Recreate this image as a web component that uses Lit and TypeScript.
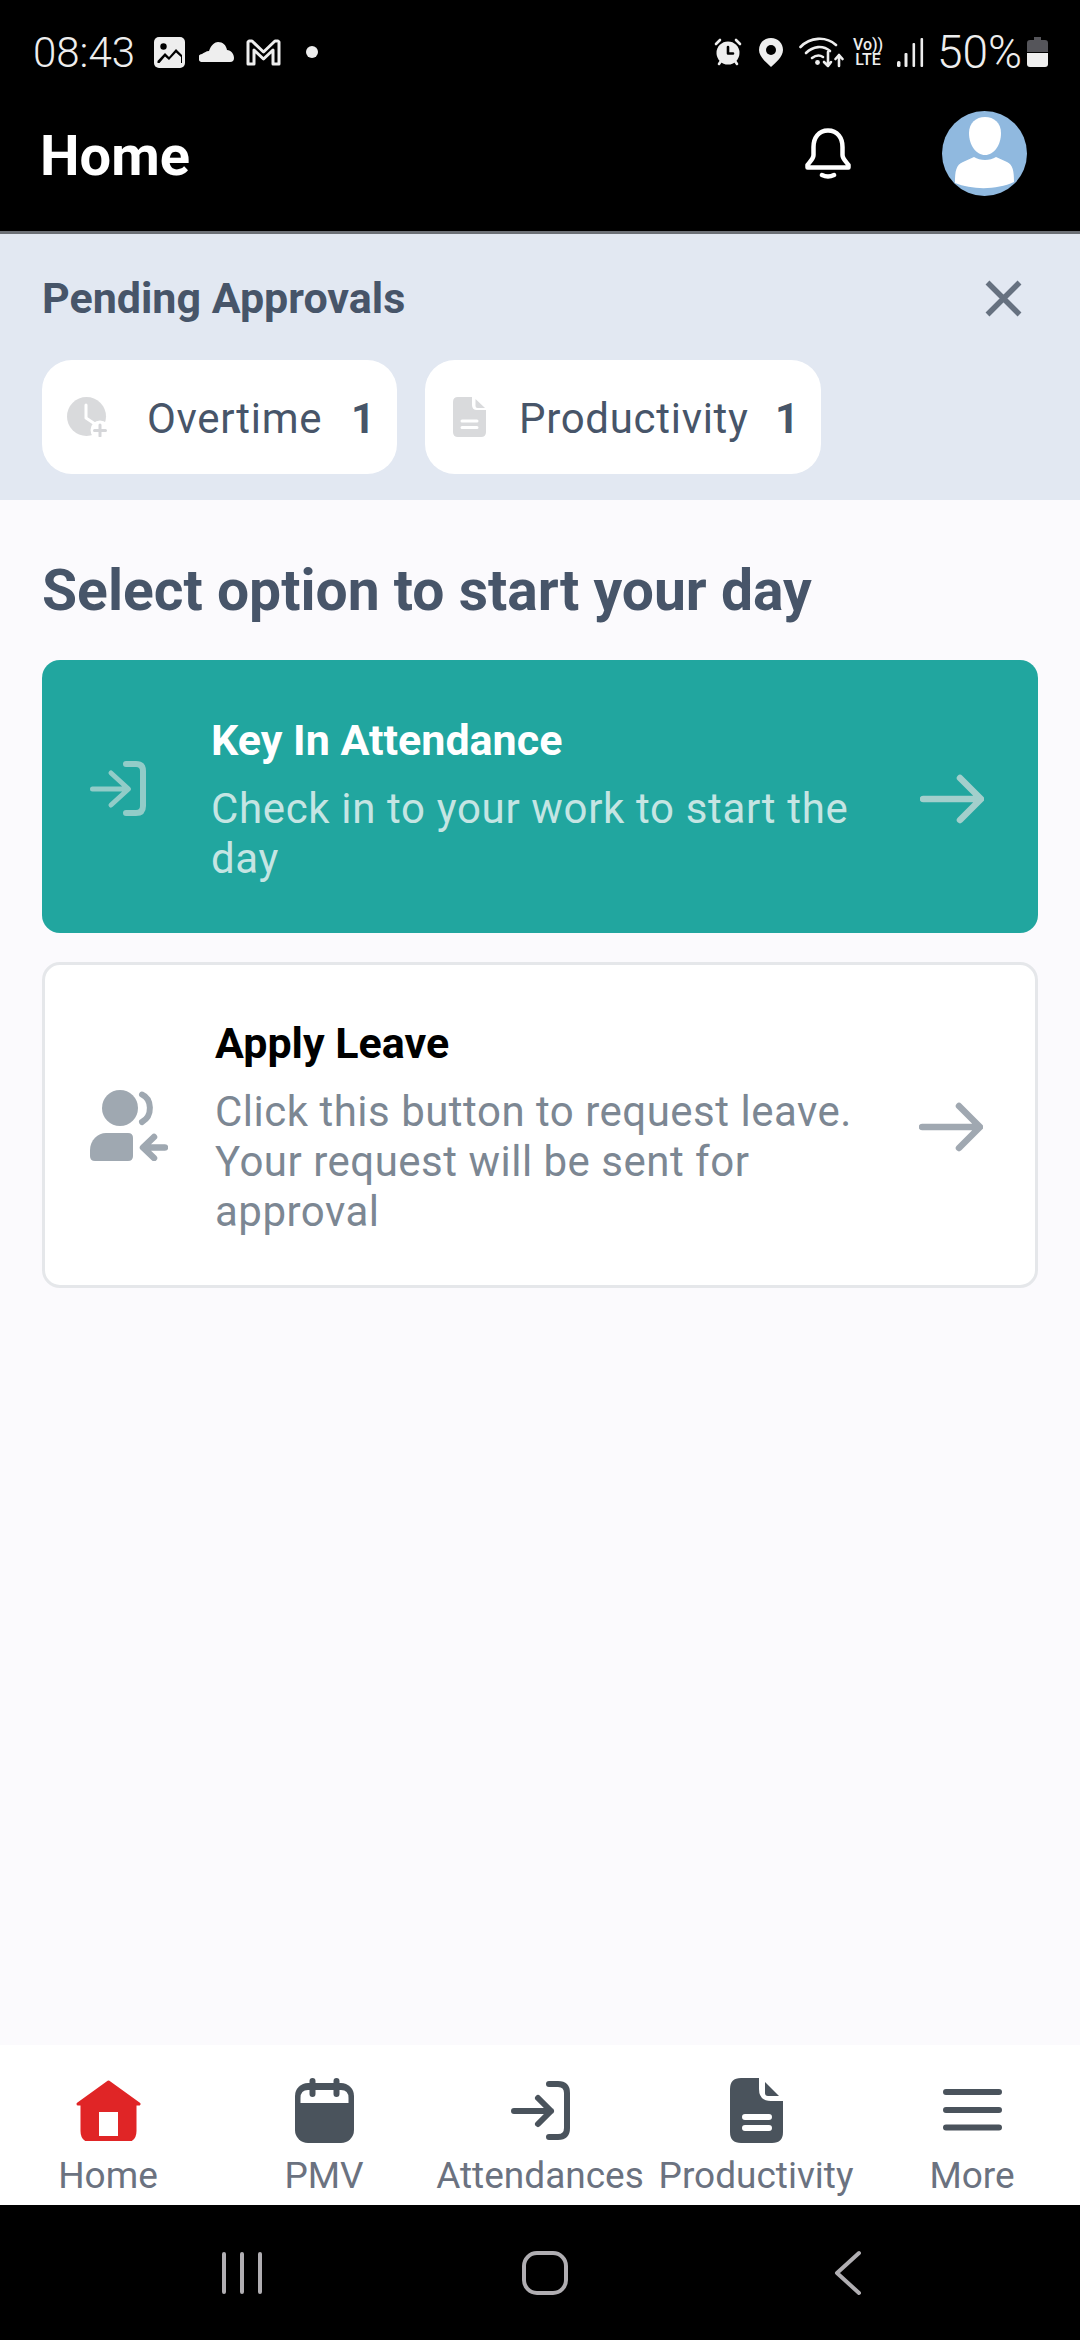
import { LitElement, html, css, svg } from "lit";
import { customElement } from "lit/decorators.js";

const ic = (w: number, h: number, body: unknown) =>
  html`<svg class="ic" width=${w} height=${h} viewBox="0 0 ${w} ${h}" fill="none" stroke-linecap="round" stroke-linejoin="round">${body}</svg>`;

const DK = "#4a535c";

const imageIcon = ic(31, 31, svg`<rect width="31" height="31" rx="5" fill="#eeeeee"/><circle cx="9.5" cy="9.5" r="3.2" fill="#000"/><path d="M3.5 24 L11 16 L15 20 L22 12 L28 18 V26 H3.5Z" fill="#000"/><path d="M5.5 26 L11 19.5 L15 23 L22 15.5 L27 20 V26Z" fill="#eee"/>`);
const cloudIcon = ic(35, 20, svg`<path d="M4 20 a4 4 0 0 1 -1 -8 C5 11 7 9 10 9 C12 3 16 0 19 0 C24 0 27 3 28 8 C32 8 35 12 35 16 a4 4 0 0 1 -4 4Z" fill="#eeeeee"/>`);
const gmailIcon = ic(35, 27, svg`<path d="M2 25 V3 L3 2 H6 L17.5 13 L29 2 H32 L33 3 V25 H27 V11 L17.5 20 L8 11 V25 Z" stroke="#eeeeee" stroke-width="3"/>`);
const alarmIcon = ic(28, 28, svg`<circle cx="14" cy="15" r="11.5" fill="#eeeeee"/><path d="M14 9 V15.5 H19" stroke="#000" stroke-width="2.6"/><path d="M2 6 L6 2 M26 6 L22 2 M5 26 L7 23 M23 26 L21 23" stroke="#eeeeee" stroke-width="2.6"/>`);
const pinIcon = ic(24, 29, svg`<path d="M12 0 C5 0 0 5 0 12 C0 19 8 25 12 29 C16 25 24 19 24 12 C24 5 19 0 12 0Z" fill="#eeeeee"/><circle cx="12" cy="12" r="5" fill="#000"/>`);
const wifiIcon = ic(45, 32, svg`<g stroke="#eeeeee" stroke-width="2.6"><path d="M1.5 11 C11 1 27 0 37 9"/><path d="M7 17 C14 10 24 9 31 15"/><path d="M13 22 C17 19 21 19 24 21"/><path d="M29 16 V30 M25 26 L29 30 L32 26"/><path d="M40 30 V19 M36.5 23 L40 19 L43.5 23"/></g><circle cx="18.5" cy="26.5" r="2.4" fill="#eeeeee"/>`);
const signalIcon = ic(28, 29, svg`<g fill="#eeeeee"><rect x="1" y="23" width="3.5" height="6" rx="1.5"/><rect x="8.5" y="15" width="3" height="14" rx="1"/><rect x="16.5" y="5" width="2.6" height="24" rx="1"/><rect x="24.5" y="0" width="2.6" height="29" rx="1"/></g>`);
const batteryIcon = ic(21, 30, svg`<path d="M7 0 H14 V3 H18 Q21 3 21 6 V15 H0 V6 Q0 3 3 3 H7Z" fill="#55555a"/><path d="M0 16 H21 V27 Q21 30 18 30 H3 Q0 30 0 27Z" fill="#eeeeee"/>`);
const bellIcon = ic(46, 52, svg`<g stroke="#fff" stroke-width="4.5"><path d="M23 2.5 C13.5 2.5 8.5 10 8.5 19 V27 C8.5 31 4.5 34 2.5 37 V39.5 H43.5 V37 C41.5 34 37.5 31 37.5 27 V19 C37.5 10 32.5 2.5 23 2.5Z"/><path d="M17 47 Q23 50 29 47"/></g>`);
const avatarIcon = ic(85, 85, svg`<circle cx="42.5" cy="42.5" r="42.5" fill="#90b9df"/><path d="M43 6 C52 6 59 12 59 22 C59 34 52 44 43 44 C34 44 27 34 27 22 C27 12 34 6 43 6Z" fill="#fff"/><path d="M13 72 C13 60 14 54 21 51 L32 46 C38 50 48 50 54 46 L65 51 C71 54 72 60 72 71 C55 79 30 79 13 72Z" fill="#fff"/>`);
const closeIcon = ic(37, 37, svg`<path d="M2.5 2.5 L34.5 34.5 M34.5 2.5 L2.5 34.5" stroke="#667180" stroke-width="5.5" stroke-linecap="butt"/>`);
const clockIcon = ic(41, 40, svg`<circle cx="19.5" cy="19.5" r="19.5" fill="#d9dadc"/><path d="M19 8 V21 L28 27" stroke="#fff" stroke-width="3"/><circle cx="33" cy="33" r="9.5" fill="#fff"/><path d="M33 28 V39 M27.5 33.5 H38.5" stroke="#d5d6d9" stroke-width="3"/>`);
const fileChipIcon = ic(33, 40, svg`<path d="M5 0 H19 V8 Q19 13 24 13 H33 V35 Q33 40 28 40 H5 Q0 40 0 35 V5 Q0 0 5 0Z" fill="#d9dadc"/><path d="M22.5 2 L32 11 H24.5 Q22.5 11 22.5 9Z" fill="#d9dadc"/><path d="M9 24 H24 M9 30.5 H24" stroke="#fff" stroke-width="3"/>`);
const keyIcon = ic(56, 55, svg`<g stroke="#92ccc8"><path d="M2.5 28 H38 M21 12 L38.5 28 L21 44" stroke-width="5"/><path d="M36 3 H46 Q53 3 53 10 V45 Q53 52 46 52 H36" stroke-width="6"/></g>`);
const arrow = (c: string) => ic(64, 50, svg`<path d="M3 25 H60 M40 4 L61 25 L40 46" stroke=${c} stroke-width="6.5"/>`);
const leaveIcon = ic(78, 71, svg`<circle cx="30" cy="18" r="18" fill="#9fa8b1"/><path d="M52 4.5 C62 9 63 26 52 32" stroke="#9fa8b1" stroke-width="6"/><path d="M16 43 H38 Q43 43 43 48 V66 Q43 71 38 71 H5 Q0 71 0 66 V60 C0 50 8 43 16 43Z" fill="#9fa8b1"/><path d="M75 57.5 H55 M64 47 L53 57.5 L64 68" stroke="#9fa8b1" stroke-width="6.5"/>`);
const navHome = ic(65, 61, svg`<path d="M32.5 2 L63 24 H59 V51 Q59 61 49 61 H16 Q6 61 6 51 V24 H2Z" fill="#e02526" stroke="#e02526" stroke-width="3"/><rect x="23" y="32" width="19" height="24" fill="#fff"/>`);
const navCal = ic(59, 65, svg`<rect y="5" width="59" height="60" rx="13" fill=${DK}/><path d="M5.5 25 V20 Q5.5 12 13 12 H46 Q53.5 12 53.5 20 V25Z" fill="#fff"/><path d="M17.5 3 V16 M41.5 3 V16" stroke=${DK} stroke-width="6"/>`);
const navAtt = ic(59, 59, svg`<g stroke=${DK} stroke-width="6"><path d="M3 30 H40 M27 17 L40 30 L27 43"/><path d="M38 3 H47 Q56 3 56 12 V47 Q56 56 47 56 H38"/></g>`);
const navFile = ic(53, 65, svg`<path d="M11 0 H29 V11 Q29 23 41 23 H53 V54 Q53 65 42 65 H11 Q0 65 0 54 V11 Q0 0 11 0Z" fill=${DK}/><path d="M35 4 L49 18 H38 Q35 18 35 15Z" fill=${DK}/><path d="M15 39 H39 M15 50 H39" stroke="#fff" stroke-width="6"/>`);
const navMenu = ic(59, 42, svg`<path d="M3 3 H56 M3 21 H56 M3 38.5 H56" stroke=${DK} stroke-width="6"/>`);
const recents = ic(42, 42, svg`<path d="M2 2 V40 M20 2 V40 M38 2 V40" stroke="#b0aeb2" stroke-width="4"/>`);
const homeBtn = ic(46, 44, svg`<rect x="2" y="2" width="42" height="40" rx="13" stroke="#b0aeb2" stroke-width="4"/>`);
const backBtn = ic(28, 46, svg`<path d="M25 3 L3 23 L25 43" stroke="#b0aeb2" stroke-width="4"/>`);

@customElement("app-root")
export class AppRoot extends LitElement {
  static styles = css`
    :host { display: flex; flex-direction: column; width: 1080px; height: 2340px; background: #fbfafd; font-family: Roboto, "Liberation Sans", sans-serif; overflow: hidden; }
    .ic { display: block; flex: none; }
    .top { background: #000; height: 231px; border-bottom: 3px solid #6b6f75; box-sizing: content-box; flex: none; }
    .status { height: 104px; display: flex; align-items: center; justify-content: space-between; padding: 0 32px 0 33px; color: #eee; }
    .group { display: flex; align-items: center; }
    .time { font-size: 42px; font-weight: 300; width: 121px; }
    .cloud { margin: 0 12px 0 14px; }
    .dot { width: 12px; height: 12px; border-radius: 50%; background: #eee; margin-left: 25px; }
    .pin { margin: 0 16px 0 17px; }
    .volte { font-size: 16px; line-height: 15px; font-weight: 500; width: 30px; margin: 0 13px 0 9px; text-align: center; }
    .pct { font-size: 46px; font-weight: 300; margin: 0 5px 0 13px; }
    .bar { display: flex; align-items: center; height: 85px; margin-top: 7px; padding: 0 53px 0 40px; }
    .bar h1 { margin: 4px 0 0; font-size: 56px; font-weight: 700; color: #fff; flex: 1; letter-spacing: 0; }
    .bell { margin-right: 91px; }
    .banner { background: #e2e8f2; height: 266px; padding: 28px 58px 0 42px; flex: none; box-sizing: border-box; }
    .bhead { display: flex; align-items: center; justify-content: space-between; height: 72px; }
    .bhead span { font-size: 43px; font-weight: 700; color: #475569; }
    .chips { display: flex; gap: 28px; margin-top: 26px; }
    .chip { height: 114px; background: #fff; border-radius: 30px; display: flex; align-items: center; font-size: 42px; color: #475569; box-sizing: border-box; }
    .chip b { font-weight: 700; padding-top: 3px; }
    .chip.o { padding: 0 22px 0 25px; width: 355px; }
    .chip.p { padding: 0 22px 0 28px; width: 396px; }
    .chip .l { flex: 1; letter-spacing: 0.7px; padding-top: 3px; }
    .chip.o .l { margin-left: 39px; }
    .chip.p .l { margin-left: 33px; }
    main { flex: 1; padding: 61px 42px 0; }
    h2 { margin: 0 0 39px; font-size: 57px; line-height: 60px; font-weight: 700; color: #475569; }
    .card { display: flex; align-items: center; border-radius: 18px; box-sizing: border-box; }
    .card h3 { margin: 2px 0 16px; font-size: 43px; line-height: 56px; font-weight: 700; }
    .card p { margin: 0; font-size: 42px; line-height: 50px; }
    .txt { flex: 1; }
    .teal { background: #21a69f; height: 273px; padding: 0 54px 0 48px; margin-bottom: 29px; }
    .teal > .ic:first-child { margin-bottom: 17px; }
    .teal > .ic:last-child { margin-top: 4px; }
    .teal .txt { margin: 0 30px 0 65px; }
    .teal h3 { color: #fff; }
    .teal p { color: #c5e5e3; letter-spacing: 0.65px; }
    .white { background: #fff; border: 3px solid #e5e7ea; height: 326px; padding: 0 52px 0 45px; }
    .white > .ic:last-child { margin-top: 3px; }
    .white .txt { margin: 0 31px 0 47px; }
    .white h3 { color: #000; }
    .white p { color: #7c8793; letter-spacing: 0.5px; }
    nav { background: #fff; height: 160px; display: grid; grid-template-columns: repeat(5, 216px); flex: none; }
    .item { display: flex; flex-direction: column; align-items: center; padding-top: 32px; }
    .slot { height: 66px; display: flex; align-items: center; justify-content: center; margin-bottom: 11px; }
    .item span { font-size: 37px; line-height: 44px; color: #6b7280; white-space: nowrap; }
    .sys { background: #000; height: 135px; display: flex; align-items: center; padding-left: 222px; flex: none; }
    .sys .h { margin-left: 258px; }
    .sys .b { margin-left: 266px; }
  `;

  render() {
    const items: [string, unknown][] = [["Home", navHome], ["PMV", navCal], ["Attendances", navAtt], ["Productivity", navFile], ["More", navMenu]];
    return html`
      <div class="top">
        <div class="status">
          <div class="group">
            <span class="time">08:43</span>${imageIcon}<span class="cloud">${cloudIcon}</span>${gmailIcon}<span class="dot"></span>
          </div>
          <div class="group">
            ${alarmIcon}<span class="pin">${pinIcon}</span>${wifiIcon}
            <span class="volte">Vo))<br />LTE</span>${signalIcon}<span class="pct">50%</span>${batteryIcon}
          </div>
        </div>
        <div class="bar"><h1>Home</h1><span class="bell">${bellIcon}</span>${avatarIcon}</div>
      </div>
      <section class="banner">
        <div class="bhead"><span>Pending Approvals</span>${closeIcon}</div>
        <div class="chips">
          <div class="chip o">${clockIcon}<span class="l">Overtime</span><b>1</b></div>
          <div class="chip p">${fileChipIcon}<span class="l">Productivity</span><b>1</b></div>
        </div>
      </section>
      <main>
        <h2>Select option to start your day</h2>
        <div class="card teal">
          ${keyIcon}
          <div class="txt"><h3>Key In Attendance</h3><p>Check in to your work to start the day</p></div>
          ${arrow("#a3cfcc")}
        </div>
        <div class="card white">
          ${leaveIcon}
          <div class="txt"><h3>Apply Leave</h3><p>Click this button to request leave. Your request will be sent for approval</p></div>
          ${arrow("#a0a8b1")}
        </div>
      </main>
      <nav>
        ${items.map(([t, i]) => html`<div class="item"><div class="slot">${i}</div><span>${t}</span></div>`)}
      </nav>
      <div class="sys">${recents}<span class="h">${homeBtn}</span><span class="b">${backBtn}</span></div>
    `;
  }
}
